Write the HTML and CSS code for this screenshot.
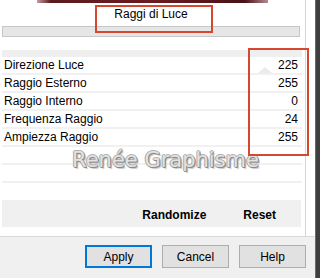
FILE: index.html
```html
<!DOCTYPE html>
<html>
<head>
<meta charset="utf-8">
<link rel="stylesheet" href="styles.css">
</head>
<body>
<div class="window">
  <div class="main">
    <div class="panel">
      <div class="content">
        <div class="preview"></div>
        <div class="title">Raggi di Luce</div>
        <div class="hscroll"></div>
        <div class="list">
          <div class="head"></div>
          <div class="row"><span>Direzione Luce</span><span>225</span></div>
          <div class="row"><span>Raggio Esterno</span><span>255</span></div>
          <div class="row"><span>Raggio Interno</span><span>0</span></div>
          <div class="row"><span>Frequenza Raggio</span><span>24</span></div>
          <div class="row"><span>Ampiezza Raggio</span><span>255</span></div>
          <div class="row empty"></div>
          <div class="row empty"></div>
          <div class="tri"></div>
          <div class="mark">Renée Graphisme</div>
        </div>
        <div class="actions">
          <span>Randomize</span>
          <span>Reset</span>
        </div>
        <div class="box box-title"></div>
        <div class="box box-values"></div>
      </div>
    </div>
    <div class="buttons">
      <button class="btn default">Apply</button>
      <button class="btn">Cancel</button>
      <button class="btn">Help</button>
    </div>
  </div>
  <div class="edge"></div>
</div>
</body>
</html>
```
FILE: styles.css
```css
html, body {
  margin: 0;
  padding: 0;
  width: 320px;
  height: 278px;
  overflow: hidden;
  font-family: "Liberation Sans", Arial, sans-serif;
  font-size: 12px;
  color: #000;
}
.window {
  display: flex;
  width: 320px;
  height: 278px;
}
.main {
  width: 316px;
  display: flex;
  flex-direction: column;
  background: #f0f0f0;
}
.edge {
  width: 4px;
  background: #3e3e3e;
  border-left: 1px solid #6a6a6a;
}
.panel {
  height: 237px;
  background: #fff;
  border-bottom: 1px solid #d9d9d9;
  box-sizing: border-box;
}
.content {
  position: relative;
  width: 306px;
  height: 236px;
  border-right: 1px solid #d6d6d6;
  box-sizing: border-box;
}
.preview {
  margin-left: 37px;
  width: 231px;
  height: 3px;
  background: linear-gradient(90deg, #c89aa0 0%, #5c1a1e 6%, #6a1c20 50%, #4a1216 90%, #b88a90 100%);
}
.title {
  height: 23px;
  box-sizing: border-box;
  padding-top: 4px;
  line-height: 14px;
  text-align: center;
  width: 302px;
}
.hscroll {
  margin-left: 2px;
  width: 298px;
  height: 11px;
  box-sizing: border-box;
  background: #e6e6e6;
  border: 1px solid #c6c6c6;
}
.list {
  position: relative;
  margin-top: 13px;
  margin-left: 2px;
  width: 300px;
}
.head {
  height: 7px;
  background: #efefef;
}
.row {
  height: 18px;
  box-sizing: border-box;
  border-bottom: 2px solid #f1f1f1;
  display: flex;
  justify-content: space-between;
  align-items: center;
  padding: 0 4px 0 2px;
  line-height: 14px;
}
.tri {
  position: absolute;
  left: 256px;
  top: 17px;
  width: 0;
  height: 0;
  border-left: 7px solid transparent;
  border-right: 7px solid transparent;
  border-bottom: 6px solid #ebebeb;
}
.mark {
  position: absolute;
  left: 70px;
  top: 98px;
  font-family: "DejaVu Sans", Verdana, sans-serif;
  font-size: 21px;
  line-height: 24px;
  color: #e2e2e2;
  text-shadow: 1px 1px 0 #8a8a8a, -1px 0 0 #a8a8a8, 0 -1px 0 #b0b0b0, 1px 0 0 #9a9a9a, 0 1px 0 #9a9a9a, 2px 2px 1px #c8c8c8;
  white-space: nowrap;
}
.actions {
  margin-top: 17px;
  margin-left: 2px;
  width: 299px;
  height: 27px;
  box-sizing: border-box;
  background: #f0f0f0;
  display: flex;
  justify-content: flex-end;
  align-items: center;
  gap: 37px;
  padding: 2px 25px 0 0;
  font-weight: bold;
}
.box {
  position: absolute;
  border: 2px solid #d5482f;
  box-sizing: border-box;
}
.box-title {
  left: 95px;
  top: 5px;
  width: 118px;
  height: 28px;
}
.box-values {
  left: 248px;
  top: 48px;
  width: 61px;
  height: 108px;
}
.buttons {
  display: flex;
  justify-content: flex-end;
  gap: 10px;
  padding: 8px 9px 0 0;
}
.btn {
  width: 67px;
  height: 23px;
  box-sizing: border-box;
  background: #e1e1e1;
  border: 1px solid #adadad;
  font-family: "Liberation Sans", Arial, sans-serif;
  font-size: 12px;
  color: #000;
  padding: 0;
}
.btn.default {
  border: 2px solid #0078d7;
}
```
